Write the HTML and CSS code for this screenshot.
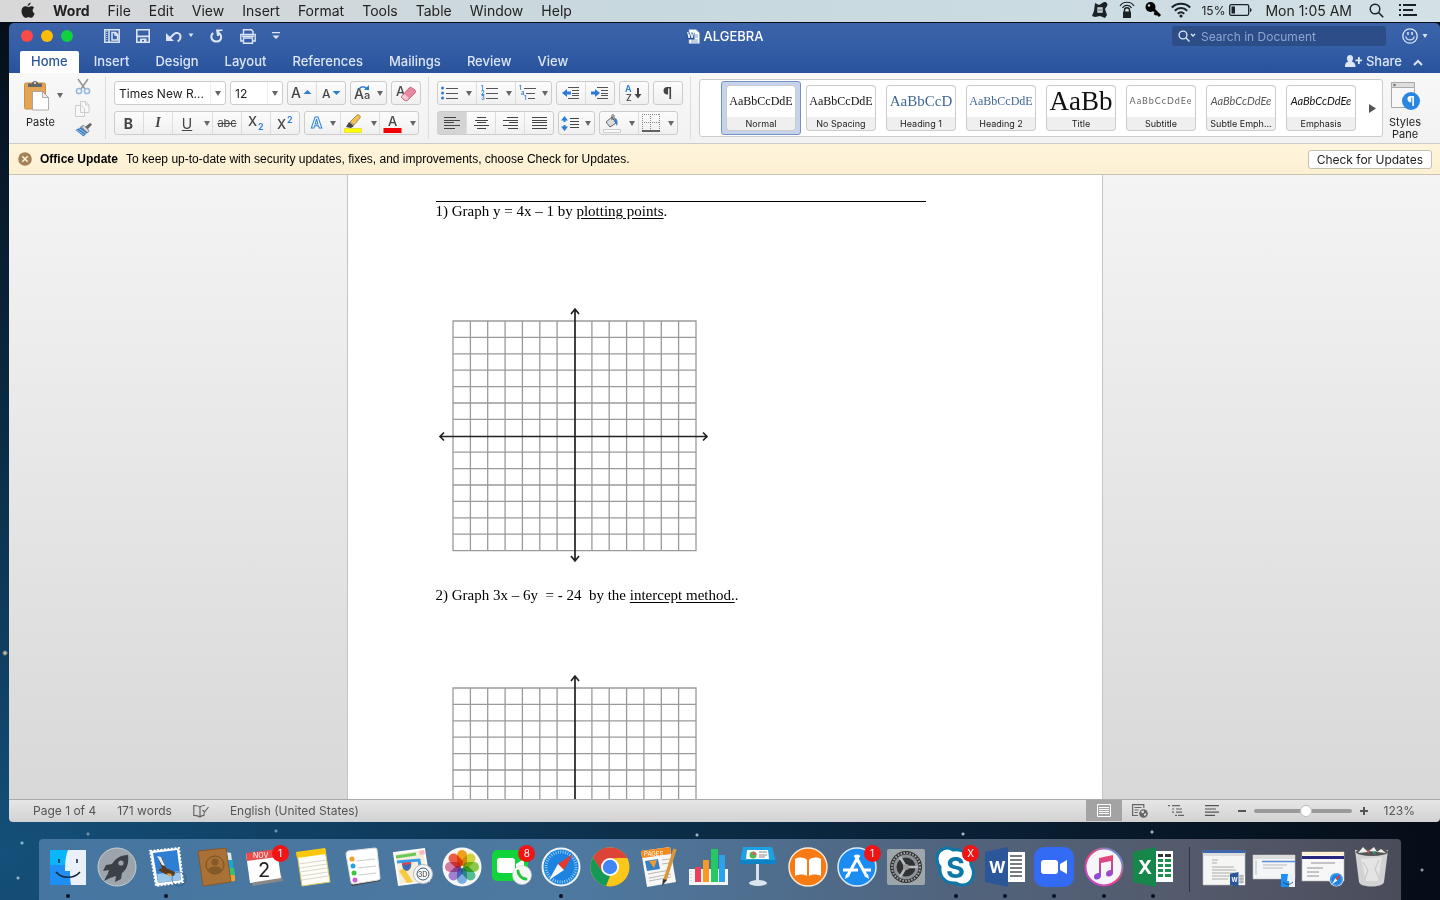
FILE: index.html
```html
<!DOCTYPE html>
<html lang="en">
<head>
<meta charset="UTF-8">
<meta name="viewport" content="width=device-width, initial-scale=1.0">
<title>ALGEBRA</title>
<link rel="stylesheet" href="styles.css">
</head>

<body>
  <header class="menubar">
    <nav class="menus">
      <button class="apple" aria-label="Apple menu"><svg width="14" height="17" viewBox="0 0 14 17"><path fill="#222" d="M9.6 0.5c.1 1.8-1.3 3.4-2.9 3.4C6.500 2.200 8 .7 9.600.5zM13.200 5.800c-2.300 1.400-1.900 4.700.5 5.700-.8 2.200-2 4.300-3.500 4.300-1 0-1.500-.6-2.700-.6s-1.700.6-2.600.6C2.900 15.800.5 12.500.5 9.200c0-3.100 1.900-4.900 3.900-4.900 1.200 0 2 .7 3 .7.900 0 1.800-.8 3.200-.8 1 0 2 .6 2.600 1.600z"/></svg></button>
      <button class="app-name">Word</button>
      <button>File</button>
      <button>Edit</button>
      <button>View</button>
      <button>Insert</button>
      <button>Format</button>
      <button>Tools</button>
      <button>Table</button>
      <button>Window</button>
      <button>Help</button>
    </nav>
    <div class="tray">
      <svg width="18" height="18" viewBox="0 0 18 18"><path fill="#1b2226" d="M4 2l4 2 5-3c3 0 4 2 3 4l-2 3 2 6-2 3-5-2-5 1-3-1 2-5z"/><path fill="none" stroke="#d5e0e4" stroke-width="1.300" d="M7 7h4v4H7zM9 7v4"/></svg>
      <svg width="16" height="18" viewBox="0 0 16 18"><g fill="none" stroke="#1b2226"><path d="M1 5c3-5 11-5 14 0M3.500 7c2-3.500 7-3.500 9 0" stroke-width="1.200"/><path d="M5.500 11V9c0-3 5-3 5 0v2" stroke-width="1.400"/></g><path fill="#1b2226" d="M4 10.500h8v6.500H4z"/></svg>
      <svg width="16" height="18" viewBox="0 0 16 18"><circle cx="5.500" cy="6" r="5" fill="#000"/><circle cx="4" cy="4.500" r="1.200" fill="#d5e0e4"/><path stroke="#000" stroke-width="3" d="M8 8l7 7M11 12l-1 2"/></svg>
      <svg width="20" height="16" viewBox="0 0 20 16"><g fill="none" stroke="#1b2226" stroke-width="2"><path d="M.8 5.500c5-5 13.400-5 18.400 0M3.800 8.700c3.600-3.500 8.800-3.500 12.400 0M6.800 11.800c2-1.900 4.400-1.900 6.400 0"/></g><circle cx="10" cy="14" r="1.600" fill="#1b2226"/></svg>
      <span class="battery">15%
        <svg width="23" height="12" viewBox="0 0 23 12"><rect x=".7" y=".7" width="19" height="10.600" rx="1.500" fill="none" stroke="#1b2226" stroke-width="1.300"/><path fill="#1b2226" d="M2.500 2.500h3.500v7H2.500zM21 4c2 0 2 4 0 4z"/></svg>
      </span>
      <span class="clock">Mon 1:05 AM</span>
      <button aria-label="Spotlight"><svg width="15" height="15" viewBox="0 0 15 15"><circle cx="6" cy="6" r="4.800" fill="none" stroke="#1b2226" stroke-width="1.400"/><path stroke="#1b2226" stroke-width="1.600" d="M9.500 9.500l4.700 4.700"/></svg></button>
      <button aria-label="Notifications"><svg width="18" height="12" viewBox="0 0 18 12"><path stroke="#1b2226" stroke-width="2" d="M0 1h2M4 1h13M0 6h2M4 6h10M0 11h2M4 11h14"/></svg></button>
    </div>
  </header>

  <main class="window">
    <div class="titlebar">
      <div class="quick">
        <button class="light red" aria-label="Close"></button>
        <button class="light yellow" aria-label="Minimize"></button>
        <button class="light green" aria-label="Zoom"></button>
        <div class="quick-tools">
          <button aria-label="Sidebar"><svg width="16" height="14" viewBox="0 0 16 14"><path fill="none" stroke="#dce5f5" stroke-width="1.500" d="M.8.8h14.400v12.400H.8zM5 1v12M8 3.500h3.500l2 2V11H8zM11 3.500V6h2.500"/><path stroke="#dce5f5" stroke-dasharray="1 1" d="M2.800 2v10"/></svg></button>
          <button aria-label="Save"><svg width="14" height="14" viewBox="0 0 14 14"><path fill="none" stroke="#dce5f5" stroke-width="1.600" d="M.8.8h12.400v12.400H.8z"/><path fill="#dce5f5" d="M1 6.500h12v1.800H1zM4 9.500h6.500V13H8v-2H6v2H4z"/></svg></button>
          <button aria-label="Undo"><svg width="28" height="14" viewBox="0 0 28 14"><path fill="none" stroke="#dce5f5" stroke-width="2" d="M3 10l5-5c2.500-2 6-1 6.500 2 .3 2-.8 4-2.800 5.500"/><path fill="#dce5f5" d="M0 4v8h8zM22.500 4.500h5L25 8z"/></svg></button>
          <button aria-label="Repeat"><svg width="14" height="14" viewBox="0 0 14 14"><path fill="none" stroke="#dce5f5" stroke-width="2" d="M3 3.800C-.5 8 2 12.500 6.500 12.500S13 7.500 9 4"/><path fill="#dce5f5" d="M6 .5h6.500v1.500H9.500L9 7H7z"/></svg></button>
          <button aria-label="Print"><svg width="16" height="15" viewBox="0 0 16 15"><path fill="none" stroke="#dce5f5" stroke-width="1.400" d="M3.500 5V.8h8L13 2.500V5M3.500 12H.8V5.500h14.400V12h-2.700M3.500 9h9v5.200h-9z"/><path fill="#dce5f5" d="M2 6.500h12v1.500H2z"/></svg></button>
          <button aria-label="Customize toolbar"><svg width="8" height="8" viewBox="0 0 8 8"><path fill="#dce5f5" d="M0 0h8v1.200H0zM.5 3.500h7L4 7z"/></svg></button>
        </div>
      </div>
      <h1 class="doc-title">
        <svg width="14" height="15" viewBox="0 0 14 15"><path fill="#fff" stroke="#8fa7cf" stroke-width=".6" d="M3 .5h7l3.500 3.500v10.500H3z"/><path stroke="#7f9bd0" d="M9 6h3M9 8h3M5 11h7M5 13h7"/><path fill="#2b579a" d="M.5 3.500h8v7h-8z"/><text x="1" y="9" fill="#fff" font-size="7" font-weight="700">W</text></svg>
        ALGEBRA
      </h1>
      <div class="title-right">
        <label class="search">
          <svg width="18" height="12" viewBox="0 0 18 12"><g fill="none" stroke="#dce5f5" stroke-width="1.400"><circle cx="5" cy="5" r="3.900"/><path d="M8 8l3.500 3.500M13 4l2 2 2-2"/></g></svg>
          <input type="text" placeholder="Search in Document" aria-label="Search in Document">
        </label>
        <button aria-label="Feedback"><svg width="26" height="16" viewBox="0 0 26 16"><g fill="none" stroke="#dce5f5" stroke-width="1.300"><circle cx="8" cy="8" r="7.200"/><path d="M3.800 8.500c.8 4.500 7.600 4.500 8.400 0"/></g><path fill="#dce5f5" d="M5.200 4h1.500v3H5.200zM9.300 4h1.500v3H9.300zM20.500 6h5L23 10z"/></svg></button>
      </div>
    </div>

    <div class="tabs">
      <button class="tab active">Home</button>
      <button class="tab">Insert</button>
      <button class="tab">Design</button>
      <button class="tab">Layout</button>
      <button class="tab">References</button>
      <button class="tab">Mailings</button>
      <button class="tab">Review</button>
      <button class="tab">View</button>
      <button class="share">
        <svg width="17" height="13" viewBox="0 0 17 13"><path fill="#dce5f5" d="M5 0c4 0 3.500 5 1.800 6.500 2 .8 3.700 1.500 3.700 5.500H0c0-4 1.500-4.700 3.300-5.500C1.500 5 1 0 5 0zM13 2h1.800v2.500H17v1.800h-2.200V9H13V6.300h-2.500V4.500H13z"/></svg>
        Share
      </button>
      <button class="collapse" aria-label="Collapse ribbon"><svg width="10" height="7" viewBox="0 0 10 7"><path fill="none" stroke="#dce5f5" stroke-width="2" d="M1 6l4-4 4 4"/></svg></button>
    </div>

    <div class="ribbon">
      <section class="clipboard">
        <button class="paste">
          <span class="paste-icon">
            <svg width="26" height="31" viewBox="0 0 26 31"><rect x=".5" y="3" width="21" height="26" rx="1.500" fill="#e3a556" stroke="#c98f45"/><path fill="#666" d="M4 7V3.500h4C8 0 14 0 14 3.500h4V7z"/><circle cx="11" cy="3" r="1" fill="#eee"/><path fill="#fff" stroke="#999" stroke-width=".8" d="M8.500 11.500h10l6 6V30h-16z"/><path fill="#eee" stroke="#999" stroke-width=".8" d="M18.500 11.500v6h6z"/></svg>
            <i class="caret"></i>
          </span>
          Paste
        </button>
        <div class="clip-tools">
          <button aria-label="Cut"><svg width="16" height="17" viewBox="0 0 16 17"><path stroke="#999" stroke-width="1.600" d="M3 1l7 10M13 1L6 11"/><g fill="none" stroke="#93b8df" stroke-width="1.500"><circle cx="4" cy="13" r="2.600"/><circle cx="12" cy="13" r="2.600"/></g></svg></button>
          <button aria-label="Copy"><svg width="15" height="16" viewBox="0 0 15 16"><path fill="#f8f8f8" stroke="#ccc" d="M.5 4.500h6l3 3v8h-9zM5.500.5h5l3.500 3.500v7.500H5.500zM10.500.5V4H14"/></svg></button>
          <button aria-label="Format painter"><svg width="17" height="14" viewBox="0 0 17 14"><path fill="#666" d="M10 4l5-4 2 1.500L12.500 6.500z"/><path fill="#ddd" stroke="#666" stroke-width=".8" d="M6 3.500l3-1 5 5-1.500 2.500z"/><path fill="#3b7fc4" d="M6 4L.5 7l8 6.500 4-4z"/><path stroke="#f0f0f0" stroke-width=".6" d="M2 7l7 5M4 5.500l7 5"/></svg></button>
        </div>
      </section>

      <section class="tools">
        <div class="row">
          <div class="combo wide"><select aria-label="Font"><option>Times New R...</option></select><i class="caret"></i></div>
          <div class="combo"><select aria-label="Font size"><option>12</option></select><i class="caret"></i></div>
          <div class="group">
            <button aria-label="Grow font"><svg width="21" height="16" viewBox="0 0 21 16"><text x="0" y="13" class="glyph" font-size="14">A</text><path fill="#2b7cd3" d="M12.500 9h8l-4-4z"/></svg></button>
            <button aria-label="Shrink font"><svg width="19" height="16" viewBox="0 0 19 16"><text x="0" y="13" class="glyph" font-size="12">A</text><path fill="#2b7cd3" d="M10.500 6h8l-4 4z"/></svg></button>
          </div>
          <div class="group"><button class="drop" aria-label="Change case"><svg width="18" height="18" viewBox="0 0 18 18"><text x="0" y="15" class="glyph" font-size="14">A</text><text x="10" y="15" class="glyph" font-size="11">a</text><path fill="none" stroke="#2b7cd3" stroke-width="1.600" d="M5 5c2-3 6-3 8 0"/><path fill="#2b7cd3" d="M10 6h5V1z"/></svg><i class="caret"></i></button></div>
          <div class="group"><button aria-label="Clear formatting"><svg width="22" height="20" viewBox="0 0 22 20"><text x="1" y="13" class="glyph" font-size="13">A</text><path fill="#e887a0" stroke="#b75a76" stroke-width=".8" d="M6 14l8-9c1-1 2-1 3 0l3 2c.8 1 .8 2 0 3l-7 7c-1 1-3 1-4 0z"/><path fill="#f8c9d5" d="M6.500 14l3-3 4.500 4-3 2.500z"/></svg></button></div>
        </div>
        <div class="row">
          <div class="group">
            <button class="bold">B</button>
            <button class="italic">I</button>
            <button class="underline">U</button>
            <button class="arrow" aria-label="Underline style"><i class="caret"></i></button>
            <button class="strike">abc</button>
            <button class="script" aria-label="Subscript"><svg width="17" height="18" viewBox="0 0 17 18"><text x="0" y="12" class="glyph" font-size="13">X</text><text x="10" y="16" class="blue" font-size="9">2</text></svg></button>
            <button class="script" aria-label="Superscript"><svg width="17" height="18" viewBox="0 0 17 18"><text x="0" y="15" class="glyph" font-size="13">X</text><text x="10" y="9" class="blue" font-size="9">2</text></svg></button>
          </div>
          <div class="group">
            <button class="drop" aria-label="Text effects"><svg width="16" height="18" viewBox="0 0 16 18"><text x="2" y="14" font-size="15" font-weight="700" fill="#fff" stroke="#2f86d8" stroke-width="1">A</text></svg><i class="caret"></i></button>
            <button class="drop long" aria-label="Highlight"><svg width="19" height="19" viewBox="0 0 19 19"><path fill="#f2c14e" stroke="#6b5b33" stroke-width=".6" d="M6 8l7-7c2-1 4 1 3 3l-6 7z"/><path fill="#444" d="M5 8l5 4-3 2-5-1z"/><path fill="#ff0" stroke="#cccc00" stroke-width=".5" d="M.5 14.500h17v4H.5z"/></svg><i class="caret"></i></button>
            <button class="drop long" aria-label="Font color"><svg width="19" height="19" viewBox="0 0 19 19"><text x="5" y="12" class="glyph" font-size="13">A</text><path fill="#f00000" d="M.5 14h18v5H.5z"/></svg><i class="caret"></i></button>
          </div>
        </div>
      </section>

      <section class="tools">
        <div class="row">
          <div class="group">
            <button class="drop long" aria-label="Bullets"><svg width="17" height="14" viewBox="0 0 17 14"><path stroke="#555" d="M5 2.500h12M5 7.500h12M5 12.500h12"/><g fill="#2b7cd3"><circle cx="1.500" cy="2" r="1.500"/><circle cx="1.500" cy="7" r="1.500"/><circle cx="1.500" cy="12" r="1.500"/></g></svg><i class="caret"></i></button>
            <button class="drop long" aria-label="Numbering"><svg width="17" height="16" viewBox="0 0 17 16"><path stroke="#555" d="M5 3.500h12M5 8.500h12M5 13.500h12"/><g class="blue" font-size="6"><text x="0" y="5">1</text><text x="0" y="10">2</text><text x="0" y="15">3</text></g></svg><i class="caret"></i></button>
            <button class="drop" aria-label="Multilevel list"><svg width="18" height="16" viewBox="0 0 18 16"><path stroke="#555" d="M5 3.500h12M7 8.500h9M9 13.500h7"/><g class="blue" font-size="6"><text x="0" y="5">1</text><text x="2" y="10">a</text><text x="5" y="15">1</text></g></svg><i class="caret"></i></button>
          </div>
          <div class="group">
            <button aria-label="Decrease indent"><svg width="18" height="12" viewBox="0 0 18 12"><path stroke="#555" d="M6 .5h11M10 3.500h7M10 6.500h7M10 8.500h7M6 11.500h11"/><path fill="#2b7cd3" d="M0 6l5-4v2.500h4v3H5V10z"/></svg></button>
            <button aria-label="Increase indent"><svg width="18" height="12" viewBox="0 0 18 12"><path stroke="#555" d="M6 .5h11M10 3.500h7M10 6.500h7M10 8.500h7M6 11.500h11"/><path fill="#2b7cd3" d="M9 6L4 2v2.500H0v3h4V10z"/></svg></button>
          </div>
          <div class="group"><button aria-label="Sort"><svg width="17" height="18" viewBox="0 0 17 18"><text x="0" y="8" class="blue" font-size="9">A</text><text x="1" y="17" class="glyph" font-size="9">Z</text><path fill="#444" d="M12 4h2v6h2.500L13 14.500 9.500 10H12z"/></svg></button></div>
          <div class="group"><button class="pilcrow" aria-label="Show paragraph marks">¶</button></div>
        </div>
        <div class="row">
          <div class="group">
            <button class="pressed" aria-label="Align left"><svg width="16" height="12" viewBox="0 0 16 12"><path stroke="#444" d="M0 .5h12M0 3.500h16M0 5.500h10M0 8.500h16M0 11.500h11"/></svg></button>
            <button aria-label="Center"><svg width="15" height="12" viewBox="0 0 15 12"><path stroke="#444" d="M3 .5h9M1 3.500h13M3 5.500h9M0 8.500h15M3 11.500h9"/></svg></button>
            <button aria-label="Align right"><svg width="15" height="12" viewBox="0 0 15 12"><path stroke="#444" d="M4 .5h11M0 3.500h15M6 5.500h9M0 8.500h15M5 11.500h10"/></svg></button>
            <button aria-label="Justify"><svg width="15" height="12" viewBox="0 0 15 12"><path stroke="#444" d="M0 .5h15M0 3.500h15M0 5.500h15M0 8.500h15M0 11.500h15"/></svg></button>
          </div>
          <div class="group"><button class="drop" aria-label="Line spacing"><svg width="19" height="15" viewBox="0 0 19 15"><path stroke="#444" d="M9 2.500h9M9 5.500h9M9 8.500h9M9 11.500h9"/><path fill="#2b7cd3" d="M3.500 0L7 4.500H4.500V6h-2V4.500H0zM3.500 15L7 10.500H4.500V9h-2v1.500H0z"/></svg><i class="caret"></i></button></div>
          <div class="group">
            <button class="drop long" aria-label="Shading"><svg width="18" height="19" viewBox="0 0 18 19"><path fill="#ddd" stroke="#555" stroke-width=".9" d="M3 8l6-5 4 6-6 4z"/><path fill="none" stroke="#555" d="M9 6V1.500c0-1 2-1 2 0V6"/><path fill="#3b7fc4" d="M12 4c3 1 3 5 2 8-1-1-1-3-3-5z"/><path fill="#fafafa" stroke="#ccc" d="M.5 15.500h17v3H.5z"/></svg><i class="caret"></i></button>
            <button class="drop long" aria-label="Borders"><svg width="18" height="18" viewBox="0 0 18 18"><path fill="none" stroke="#888" stroke-dasharray="1 1" d="M.5 0v17M8.500 0v17M17.500 0v17M0 .5h18M0 8.500h18"/><path stroke="#333" stroke-width="1.500" d="M0 17h18"/></svg><i class="caret"></i></button>
          </div>
        </div>
      </section>

      <section class="styles">
        <div class="gallery">
          <button class="style selected"><span class="sample">AaBbCcDdE</span><span class="name">Normal</span></button>
          <button class="style"><span class="sample">AaBbCcDdE</span><span class="name">No Spacing</span></button>
          <button class="style"><span class="sample heading1">AaBbCcD</span><span class="name">Heading 1</span></button>
          <button class="style"><span class="sample heading2">AaBbCcDdE</span><span class="name">Heading 2</span></button>
          <button class="style"><span class="sample title">AaBb</span><span class="name">Title</span></button>
          <button class="style"><span class="sample subtitle">AaBbCcDdEe</span><span class="name">Subtitle</span></button>
          <button class="style"><span class="sample subtle">AaBbCcDdEe</span><span class="name">Subtle Emph...</span></button>
          <button class="style"><span class="sample emphasis">AaBbCcDdEe</span><span class="name">Emphasis</span></button>
          <button class="more" aria-label="More styles"><svg width="7" height="9" viewBox="0 0 7 9"><path fill="#555" d="M0 0l7 4.500L0 9z"/></svg></button>
        </div>
        <button class="pane">
          <svg width="30" height="30" viewBox="0 0 30 30"><path fill="#f8f8f8" stroke="#aaa" d="M1.500 1.500h23v25h-23z"/><path fill="#ddd" stroke="#aaa" d="M1.500 1.500h23v5h-23z"/><circle cx="4.500" cy="4" r="1.300" fill="#777"/><circle cx="21" cy="20" r="9" fill="#2b86e0"/><text x="17" y="25" fill="#fff" font-size="13" font-weight="700">¶</text></svg>
          Styles<br>Pane
        </button>
      </section>
    </div>

    <div class="update">
      <button class="dismiss" aria-label="Dismiss"><svg width="14" height="14" viewBox="0 0 14 14"><circle cx="7" cy="7" r="6.800" fill="#a5815a"/><path stroke="#fff3da" stroke-width="1.600" d="M4.300 4.300l5.400 5.400M9.700 4.300L4.300 9.700"/></svg></button>
      <strong>Office Update</strong>
      <span>To keep up-to-date with security updates, fixes, and improvements, choose Check for Updates.</span>
      <button class="check">Check for Updates</button>
    </div>

    <div class="canvas">
      <article class="page">
        <hr>
        <p>1) Graph y = 4x – 1 by <u>plotting points</u>.</p>
        <svg class="graph first" width="271" height="256" viewBox="0 0 271 256">
          <g id="axes">
            <path fill="none" stroke="#9a9a9a" stroke-width="1.300" d="M15 14h243v229.600H15zM32.400 14v229.600M49.700 14v229.600M67.100 14v229.600M84.400 14v229.600M101.800 14v229.600M119.100 14v229.600M153.900 14v229.600M171.200 14v229.600M188.600 14v229.600M205.900 14v229.600M223.300 14v229.600M240.600 14v229.600M15 30.400h243M15 46.800h243M15 63.200h243M15 79.600h243M15 96h243M15 112.400h243M15 145.200h243M15 161.600h243M15 178h243M15 194.400h243M15 210.800h243M15 227.200h243"/>
            <path fill="none" stroke="#222" stroke-width="1.700" d="M137 2v252M2 129.500h267M133 7l4-5 4 5M133 249l4 5 4-5M6 125.500l-4 4 4 4M265 125.500l4 4-4 4"/>
          </g>
        </svg>
        <p class="second">2) Graph 3x – 6y &nbsp;= - 24 &nbsp;by the <u>intercept method.</u>.</p>
        <svg class="graph" width="271" height="256" viewBox="0 0 271 256"><use href="#axes"/></svg>
      </article>
    </div>

    <footer class="status">
      <span>Page 1 of 4</span>
      <span>171 words</span>
      <button aria-label="Proofing"><svg width="16" height="14" viewBox="0 0 16 14"><path fill="none" stroke="#666" stroke-width="1.200" d="M7 3v10M7 3C5 1.500 3 1.500.8 1.500v9.800c2.200 0 4.200 0 6.200 1.700 1-1 2-1.500 4-1.700V9M7 3c1-1 2-1.500 5-1.500M9.500 6l2 2L15.500 3"/></svg></button>
      <button>English (United States)</button>
      <div class="view-tools">
        <div class="views">
          <button class="view current" aria-label="Print layout"><svg width="14" height="13" viewBox="0 0 14 13"><path fill="none" stroke="#fff" d="M.5.5h13v12H.5zM2 3.500h10M2 5.500h10M2 7.500h10M2 9.500h10"/></svg></button>
          <button class="view" aria-label="Web layout"><svg width="16" height="14" viewBox="0 0 16 14"><path fill="none" stroke="#666" stroke-width="1.200" d="M6 11.500H.6V.6h11.200V4M2.500 3.500h7M2.500 6h4M2.500 8.500h3"/><circle cx="11.500" cy="9.500" r="4.300" fill="#666"/><path fill="#ddd" d="M9 7l3-.5v2l-2 1zM12 10l2-1v2l-2 1z"/></svg></button>
          <button class="view" aria-label="Outline"><svg width="16" height="11" viewBox="0 0 16 11"><path stroke="#666" stroke-width="1.200" d="M0 .6h2M4 .6h8M4 4h2M8 4h6M4 7.200h2M8 7.200h6M7 10.400h2M10 10.400h6"/></svg></button>
          <button class="view" aria-label="Draft"><svg width="14" height="11" viewBox="0 0 14 11"><path stroke="#555" stroke-width="1.200" d="M0 .6h14M0 4h11M0 7.200h14M0 10.400h10"/></svg></button>
        </div>
        <button aria-label="Zoom out"><svg width="8" height="8" viewBox="0 0 8 8"><path stroke="#555" stroke-width="2" d="M0 4h8"/></svg></button>
        <input class="zoom" type="range" min="0" max="100" value="54" aria-label="Zoom">
        <button aria-label="Zoom in"><svg width="8" height="8" viewBox="0 0 8 8"><path stroke="#555" stroke-width="2" d="M0 4h8M4 0v8"/></svg></button>
        <span class="percent">123%</span>
      </div>
    </footer>
  </main>

  <nav class="dock">
    <button class="app running" aria-label="Finder"><svg viewBox="0 0 40 40"><path fill="#1d8ff5" d="M2 3h36v35H2z"/><path fill="#0bb5fb" d="M2 3h19l-3 15H2z"/><path fill="#eaf1fa" d="M20 3h18v35H23c-1-5-1-10-1-14h-5C17 14 18 8 20 3z"/><path fill="none" stroke="#10243c" stroke-width="1.500" d="M11 12v4M29 12v4M8 25c6 7 18 7 24 0"/></svg></button>
    <button class="app" aria-label="Launchpad"><svg viewBox="0 0 40 40"><circle cx="20" cy="20" r="19" fill="#9ba5ab" stroke="#c8ced1"/><path fill="#3b4146" d="M31 8c-8 0-13 4-16 9l-6 1-3 6 6-1-2 6 3 2 6-2-1 6 6-3 1-6c5-4 7-10 6-18zM10 28l-3 6 6-3z"/><circle cx="24" cy="16" r="2.600" fill="#9ba5ab"/></svg></button>
    <button class="app running" aria-label="Mail"><svg viewBox="0 0 40 40"><path fill="#fff" stroke="#fff" stroke-width="2" stroke-dasharray="2 1.500" d="M4 4l29-3 4 34-27 4z"/><path fill="#2e7fd4" d="M7 6l24-3 4 30-23 3z"/><path fill="#9bc6ea" d="M11 27l23-3 1 9-23 3z"/><path fill="#5b3b1f" d="M12 10l4 1 4 10 9 4-1 4-9-2-7-4 4-2z"/><path fill="#eee" d="M11 9l4 1 4 9-3-1z"/><path fill="#e0a030" d="M21 26l5 1-3 3z"/><circle cx="33" cy="32" r="7" fill="none" stroke="#25517c" opacity=".6"/></svg></button>
    <button class="app" aria-label="Contacts"><svg viewBox="0 0 40 40"><path fill="#dce8ee" d="M30 5l5 1 1 8-4 1z"/><path fill="#19a5d8" d="M31 13h6v9h-5z"/><path fill="#38c172" d="M32 21h6l1 7h-6z"/><path fill="#f0a030" d="M33 28h6v6l-6 1z"/><path fill="#a97135" stroke="#85592a" d="M2 4l28-3 5 34-28 4z"/><circle cx="19" cy="18" r="9" fill="none" stroke="#76501f"/><circle cx="19" cy="15" r="3.500" fill="#85592a"/><path fill="#85592a" d="M12 23c2-5 12-5 14 0-4 5-10 5-14 0z"/></svg></button>
    <button class="app" aria-label="Calendar"><svg viewBox="0 0 40 40"><path fill="#888" d="M4 31l32-4 2 7-30 5z"/><path fill="#fff" d="M1 7l31-4 4 28-31 5z"/><path fill="#ea4b4b" d="M1 6l31-4 1 8-31 4z"/><text x="8" y="11" fill="#fff" font-size="7">NOV</text><text x="13" y="30" fill="#222" font-size="20">2</text></svg><span class="badge">1</span></button>
    <button class="app" aria-label="Notes"><svg viewBox="0 0 40 40"><path fill="#fdfdf5" stroke="#d9c76a" d="M3 6l28-4 5 33-28 4z"/><path fill="#fbc80c" d="M2 5l29-4 1 6L3 11z"/><path stroke="#d8d8d0" d="M5 17l27-4M6 21l27-4M6 25l27-4M7 29l27-4M8 33l26-4"/></svg></button>
    <button class="app" aria-label="Reminders"><svg viewBox="0 0 40 40"><path fill="#444" d="M6 34l30-4v4L8 39z"/><path fill="#fff" stroke="#ddd" d="M4 4l27-3q2 0 2 2l3 28q0 2-2 2L9 37q-2 0-2-2L2 7q0-2 2-3z"/><circle cx="8" cy="12" r="2.500" fill="#fa9a1f"/><circle cx="9" cy="19" r="2.500" fill="#2ba3e0"/><circle cx="10" cy="26" r="2.500" fill="#38c73a"/><circle cx="11" cy="33" r="2.500" fill="#cf58dc"/><path stroke="#ccc" d="M13 14l18-2M14 21l18-2M15 28l17-2"/></svg></button>
    <button class="app" aria-label="Maps"><svg viewBox="0 0 40 40"><path fill="#f4eeda" stroke="#fff" stroke-width="2" d="M1 6l30-4 5 32-30 4z"/><path stroke="#6bc759" stroke-width="3" d="M3 10l20-3"/><path fill="none" stroke="#3a9dea" stroke-width="3" d="M4 15l22-2 2 12"/><path fill="#f6ca45" d="M6 24l5-3 9 14-6 1z"/><path fill="#f7b7c2" d="M26 4l5-1 1 4-5 1z"/><path fill="#4669ad" d="M9 16l9-1c1 5-1 8-4 9-4-1-5-4-5-8z"/><path fill="#e0444c" d="M9 16l9-1v2l-9 1z"/><circle cx="30" cy="27" r="9.500" fill="#f8f8f8" stroke="#bbb"/><circle cx="30" cy="27" r="6" fill="none" stroke="#3d5b78"/><text x="25" y="30" fill="#333" font-size="7">3D</text></svg></button>
    <button class="app" aria-label="Photos"><svg viewBox="0 0 40 40"><circle cx="20" cy="20" r="19.500" fill="#f7f7f5"/><g class="petals"><rect x="15" y="3" width="10" height="16" rx="5" fill="#fba51f"/><rect x="15" y="3" width="10" height="16" rx="5" fill="#d8da3c" transform="rotate(45 20 20)"/><rect x="15" y="3" width="10" height="16" rx="5" fill="#8fd04a" transform="rotate(90 20 20)"/><rect x="15" y="3" width="10" height="16" rx="5" fill="#58c39b" transform="rotate(135 20 20)"/><rect x="15" y="3" width="10" height="16" rx="5" fill="#7cb4ec" transform="rotate(180 20 20)"/><rect x="15" y="3" width="10" height="16" rx="5" fill="#a684d6" transform="rotate(225 20 20)"/><rect x="15" y="3" width="10" height="16" rx="5" fill="#dc7fb0" transform="rotate(270 20 20)"/><rect x="15" y="3" width="10" height="16" rx="5" fill="#f0604c" transform="rotate(315 20 20)"/></g></svg></button>
    <button class="app" aria-label="FaceTime"><svg viewBox="0 0 40 40"><rect x="0" y="3" width="36" height="31" rx="5" fill="#12d33c"/><rect x="5" y="11" width="18" height="15" rx="3" fill="#fff"/><path fill="#fff" d="M24 17l8-5v13l-8-5z"/><circle cx="30" cy="28" r="9.500" fill="#f5f5f5" stroke="#ccc" stroke-width=".6"/><path fill="none" stroke="#27c33f" stroke-width="3" stroke-linecap="round" d="M26 24c0 4 4 8 8 8"/></svg><span class="badge">8</span></button>
    <button class="app running" aria-label="Safari"><svg viewBox="0 0 40 40"><g id="compass"><circle cx="20" cy="20" r="19.500" fill="#f2f4f6"/><circle cx="20" cy="20" r="17.500" fill="#1c84e0"/><circle cx="20" cy="20" r="15" fill="none" stroke="#a9d8f7" stroke-width="3" stroke-dasharray=".8 1.600"/><path fill="#e8382e" d="M32 7L17 17l6 6z"/><path fill="#f5f5f5" d="M8 33l9-16 6 6z"/></g></svg></button>
    <button class="app" aria-label="Chrome"><svg viewBox="0 0 40 40"><circle cx="20" cy="20" r="19.500" fill="#fbc719"/><path fill="#db4437" d="M3 10.500a19.500 19.500 0 0 1 34 0L20 11.500 11.500 24z"/><path fill="#159957" d="M3 10.500l9 14 8 4.500-4 10A19.500 19.500 0 0 1 3 10.500z"/><path fill="#db4437" d="M20 11h17.300L36 8.500 20 6z"/><circle cx="20" cy="20" r="9" fill="#fff"/><circle cx="20" cy="20" r="7.200" fill="#4285f4"/></svg></button>
    <button class="app" aria-label="Pages"><svg viewBox="0 0 40 40"><path fill="#f7f7f5" d="M1 4l29-4 6 35-29 5z"/><path fill="#f58a1f" d="M1 4l29-4 1 7L2 11z"/><text x="4" y="9" fill="#fff" font-size="6">PAGES</text><path fill="#397fc4" d="M5 14l13-2 2 10-13 2z"/><path fill="#f39b35" d="M9 14l8-1-3 8z"/><path stroke="#b8b8b8" d="M22 13l8-1M22 17l8-1M8 27l22-4M9 31l22-4M9 34l22-4"/><path stroke="#d9963a" stroke-width="3.500" d="M35 2L25 33"/><path fill="#333" d="M23 32l4 1-5 6z"/></svg></button>
    <button class="app" aria-label="Numbers"><svg viewBox="0 0 40 40"><path fill="#f5f5f5" d="M0 22h39v16H0z"/><path fill="#ec3f5c" d="M6 20h6v15H6z"/><path fill="#f79a25" d="M14 13h6v22h-6z"/><path fill="#27c765" d="M22 2h7v33h-7z"/><path fill="#2aa2ec" d="M30 8h6v27h-6z"/><path stroke="#bbb" stroke-dasharray="1 2" d="M2 24v12"/></svg></button>
    <button class="app" aria-label="Keynote"><svg viewBox="0 0 40 40"><path fill="#d5e0e8" d="M18 16h3v20h-3z"/><ellipse cx="20" cy="36" rx="9" ry="3" fill="#d9e6ee"/><path fill="#1ba1e4" d="M5 0h29l4 15H2z"/><path fill="#0e83c6" d="M2 13h36v4H2z"/><path fill="#fff" d="M9 3h21l1 9H8z"/><circle cx="15" cy="8" r="3.500" fill="#51b94b"/><path fill="#e75177" d="M15 8V4.500a3.500 3.500 0 0 1 3.500 3.500z"/><path stroke="#888" d="M21 5h8M21 8h8M21 10h6"/></svg></button>
    <button class="app" aria-label="iBooks"><svg viewBox="0 0 40 40"><circle cx="20" cy="20" r="19" fill="#f77a13" stroke="#fbe9d6" stroke-width="1.500"/><path fill="#fff" d="M19 13c-3-3-8-3-12-1v17c4-2 9-2 12 0zM21 13c3-3 8-3 12-1v17c-4-2-9-2-12 0z"/></svg></button>
    <button class="app" aria-label="App Store"><svg viewBox="0 0 40 40"><circle cx="20" cy="20" r="19" fill="#1b8df2" stroke="#dcecfa" stroke-width="1.500"/><path fill="none" stroke="#fff" stroke-width="3" d="M18 8l11 20M22 8L11 28M6 23h15M27 23h7"/><path fill="#fff" d="M9 27l4 2-5 3zM31 27l-4 2 5 3z"/></svg><span class="badge">1</span></button>
    <button class="app" aria-label="System Preferences"><svg viewBox="0 0 40 40"><rect x="1" y="2" width="38" height="36" rx="2" fill="#9ca6ab"/><circle cx="20" cy="20" r="16" fill="#303336"/><circle cx="20" cy="20" r="14" fill="none" stroke="#aaa" stroke-width="2" stroke-dasharray="1.500 1.500"/><circle cx="20" cy="20" r="11" fill="none" stroke="#8d9296" stroke-width="3"/><path stroke="#b6babc" stroke-width="2.500" d="M20 20h12M20 20l-6-10M20 20l-6 10"/><circle cx="20" cy="20" r="3" fill="#999"/></svg></button>
    <button class="app running" aria-label="Skype"><svg viewBox="0 0 40 40"><path fill="#fff" stroke="#0d77a8" stroke-width="3" d="M4 4c5-4 10-3 13-1 10-2 18 6 18 15 5 8 2 20-9 20-3 0-4-1-6-2C9 37 3 29 4 20 0 15 0 8 4 4z"/><text x="10" y="31" fill="#0d77a8" font-size="29" font-weight="700">S</text></svg><span class="badge">X</span></button>
    <button class="app running" aria-label="Word"><svg viewBox="0 0 40 40"><g id="word"><path fill="#fff" d="M22 5h18v30H22z"/><path stroke="#4b5058" stroke-width="1.500" d="M25 9h12M25 13h12M25 17h12M25 21h12M25 25h12M25 29h12"/><path fill="#2b579a" d="M0 5l23-5v40L0 35z"/><text x="4" y="26" fill="#fff" font-size="16" font-weight="700">W</text></g></svg></button>
    <button class="app running" aria-label="Zoom"><svg viewBox="0 0 40 40"><rect x="0" y="0" width="40" height="40" rx="10" fill="#346bf5"/><rect x="7" y="13" width="17" height="14" rx="3" fill="#fff"/><path fill="#fff" d="M26 17l7-4v14l-7-4z"/></svg></button>
    <button class="app running" aria-label="iTunes"><svg viewBox="0 0 40 40"><defs><linearGradient id="ring" x1="0" y1="1" x2="1" y2="0"><stop offset="0" stop-color="#b04be8"/><stop offset=".5" stop-color="#f2427a"/><stop offset="1" stop-color="#38a9ef"/></linearGradient><linearGradient id="note" x1="0" y1="0" x2="0" y2="1"><stop offset="0" stop-color="#f4466b"/><stop offset="1" stop-color="#8249e8"/></linearGradient></defs><circle cx="20" cy="20" r="18.500" fill="#f6f5f8" stroke="url(#ring)" stroke-width="2"/><path fill="url(#note)" d="M15 11l14-3v18c0 4-7 5-7 1 0-3 3-4 5-4v-9l-10 2v13c0 4-7 5-7 1 0-3 3-4 5-4z"/></svg></button>
    <button class="app running" aria-label="Excel"><svg viewBox="0 0 40 40"><path fill="#fff" d="M22 4h18v31H22z"/><path fill="#1e8f50" d="M25 12h5v3h-5zM32 12h6v3h-6zM25 17h5v3h-5zM32 17h6v3h-6zM25 22h5v3h-5zM32 22h6v3h-6zM25 27h5v3h-5zM32 27h6v3h-6z"/><path fill="#333" d="M25 7h5v3h-5zM32 7h6v3h-6z"/><path fill="#17864a" d="M0 5l23-5v40L0 35z"/><text x="5" y="27" fill="#fff" font-size="19" font-weight="700">X</text></svg></button>
    <span class="divider"></span>
    <button class="app" aria-label="Word document"><svg viewBox="0 0 44 40"><path fill="#f5f5f3" stroke="#bbb" stroke-width=".6" d="M1 4h42v34H1z"/><path fill="#3d66ab" d="M1 3h42v3H1z"/><path fill="#ddd" d="M1 6h42v3H1z"/><path stroke="#999" stroke-width=".8" d="M10 13h6M10 16h5M10 20h22M10 23h24M10 26h22M10 29h18M10 32h16"/><use href="#word" transform="translate(28 25) scale(.37)"/></svg></button>
    <button class="app" aria-label="Finder window"><svg viewBox="0 0 44 40"><path fill="#f4f5f7" stroke="#bbb" stroke-width=".6" d="M1 8h42v24H1z"/><path fill="#ddd" d="M1 8h42v4H1z"/><path stroke="#5b8dd8" stroke-width="1.500" d="M10 14.500h33"/><path stroke="#aaa" stroke-width=".8" d="M4 13v15M11 18h24M11 21h20"/><path fill="#1d8ff5" d="M29 27h14v13H29z"/><path fill="#eaf1fa" d="M36 27h7v13h-6v-6h-2z"/><path fill="none" stroke="#10243c" stroke-width=".7" d="M31 35c3 3 7 3 10 0"/></svg></button>
    <button class="app" aria-label="Safari window"><svg viewBox="0 0 44 40"><path fill="#f7f7f8" stroke="#bbb" stroke-width=".6" d="M1 5h42v29H1z"/><path fill="#fff0d0" d="M1 5h42v3H1z"/><path fill="#27277f" d="M1 9h42v3H1z"/><path stroke="#777" stroke-width=".8" d="M10 16h24M6 21h16M6 25h12M6 29h12"/><use href="#compass" transform="translate(28 25) scale(.37)"/></svg></button>
    <button class="app" aria-label="Trash"><svg viewBox="0 0 40 40"><path fill="#d2d2d2" d="M3 3h33l-4 32c-1 6-24 6-25 0z"/><path fill="#e4e4e4" d="M9 12l5 22h12l4-24z"/><ellipse cx="20" cy="5" rx="16" ry="4" fill="#555"/><path fill="#eee" d="M6 6l5-6 5 5zM17 4l5-4 3 5zM25 5l4-3 5 4z"/><path fill="#ce5656" d="M15 3l3 1-2 3z"/><path fill="#3d8b7a" d="M20 5l4-1-1 4z"/><path fill="none" stroke="#c4c4c4" d="M11 15l5 8-3 9M27 13l-4 9 4 9"/></svg></button>
  </nav>
</body>
</html>
```
FILE: styles.css
```css
* {
  box-sizing: border-box;
  margin: 0;
  padding: 0;
}

body {
  height: 100vh;
  display: flex;
  flex-direction: column;
  overflow: hidden;
  font-family: Inter, Roboto, sans-serif;
  font-size: 12px;
  color: #222;
  background:
    radial-gradient(circle at 5px 653px, #c7b79b 0 1px, transparent 3px),
    radial-gradient(circle at 88px 834px, #6f91ab 0 1px, transparent 2px),
    radial-gradient(circle at 276px 831px, #6f91ab 0 1px, transparent 2px),
    radial-gradient(circle at 697px 835px, #a4b3c2 0 1px, transparent 2px),
    radial-gradient(circle at 963px 834px, #a4b3c2 0 1px, transparent 2px),
    radial-gradient(circle at 1152px 832px, #a4b3c2 0 1px, transparent 2px),
    radial-gradient(circle at 1422px 870px, #8795a8 0 1px, transparent 2px),
    radial-gradient(circle at 22px 843px, #8fb4cc 0 1px, transparent 2px),
    radial-gradient(circle at 18px 878px, #8fb4cc 0 1px, transparent 2px),
    radial-gradient(ellipse at 0 95%, #14507a, #0b2b45 35%, transparent 70%),
    #060d18;
}

button {
  border: none;
  background: none;
  font: inherit;
  color: inherit;
}

svg {
  display: block;
  flex: none;
  overflow: visible;
}

/* menu bar */
.menubar {
  height: 22px;
  flex: none;
  display: flex;
  align-items: center;
  justify-content: space-between;
  padding: 0 23px 2px 21px;
  font-size: 14px;
  background: linear-gradient(90deg, #d9d8d9, #c7d8df 45%, #cbdbe2 70%, #d3e1e6);
}

.menus, .tray {
  display: flex;
  align-items: center;
}

.menus {
  gap: 18px;
}

.app-name {
  font-weight: 700;
}

.tray {
  gap: 10px;
}

.battery {
  display: flex;
  align-items: center;
  gap: 4px;
  font-size: 12px;
}

.clock {
  margin: 0 7px 0 3px;
}

.tray button + button {
  margin-left: 5px;
}

/* word window */
.window {
  flex: 1;
  min-height: 0;
  margin: 1px 0 0 9px;
  display: flex;
  flex-direction: column;
  border-radius: 5px 5px 4px 4px;
  overflow: hidden;
}

.titlebar {
  height: 27px;
  flex: none;
  display: grid;
  grid-template-columns: 1fr auto 1fr;
  align-items: center;
  padding: 0 12px 1px;
  background: linear-gradient(#3b63a9, #335da5);
}

.quick, .quick-tools {
  display: flex;
  align-items: center;
}

.quick {
  gap: 8px;
}

.quick-tools {
  gap: 16px;
  margin-left: 23px;
}

.light {
  width: 12px;
  height: 12px;
  border-radius: 50%;
}

.red { background: #fc4a48; }
.yellow { background: #fdbc09; }
.green { background: #10cf40; }

.doc-title {
  display: flex;
  align-items: center;
  gap: 4px;
  font-size: 13px;
  font-weight: 500;
  color: #fff;
}

.title-right {
  display: flex;
  justify-content: flex-end;
  align-items: center;
  gap: 16px;
}

.search {
  width: 214px;
  height: 20px;
  display: flex;
  align-items: center;
  gap: 5px;
  padding-left: 6px;
  border-radius: 3px;
  background: #2c4d88;
}

.search input {
  min-width: 0;
  flex: 1;
  border: none;
  outline: none;
  background: none;
  font: inherit;
  color: #fff;
}

.search input::placeholder {
  color: #8ea5cf;
}

.tabs {
  height: 23px;
  flex: none;
  display: flex;
  align-items: stretch;
  padding: 1px 17px 0 11px;
  gap: 4px;
  color: #dce5f5;
  font-size: 13px;
  font-weight: 500;
  background: linear-gradient(#335da5, #28529b);
}

.tab, .share {
  padding: 0 11px 2px;
}

.tab.active {
  color: #2b579a;
  background: #fff;
  border-radius: 2px 2px 0 0;
}

.share {
  margin-left: auto;
  padding-right: 7px;
  display: flex;
  align-items: center;
  gap: 4px;
}

/* ribbon */
.ribbon {
  height: 71px;
  flex: none;
  display: flex;
  padding: 4px 0;
  border-bottom: 1px solid #ccc;
  background: linear-gradient(#f8f8f8, #f2f2f2);
}

.clipboard {
  width: 97px;
  display: flex;
  align-items: flex-start;
  padding: 1px 0 0 15px;
  border-right: 1px solid #ddd;
}

.paste {
  display: flex;
  flex-direction: column;
  align-items: flex-start;
  gap: 4px;
  padding-top: 2px;
  font-size: 11px;
  text-indent: 2px;
}

.paste-icon {
  display: flex;
  align-items: center;
  gap: 7px;
}

.clip-tools {
  display: flex;
  flex-direction: column;
  gap: 6px;
  margin-left: 12px;
}

.caret {
  flex: none;
  width: 0;
  border: 3px solid transparent;
  border-top: 5px solid #666;
  border-bottom: none;
}

.tools {
  display: flex;
  flex-direction: column;
  gap: 6px;
  padding: 4px 7px 0 8px;
  border-right: 1px solid #ddd;
}

.row {
  display: flex;
  gap: 4px;
}

.combo, .group {
  display: flex;
  align-items: center;
  height: 24px;
  border: 1px solid #ccc;
  border-radius: 3px;
}

.combo {
  width: 53px;
  padding-right: 4px;
  background: #fff;
}

.combo.wide {
  width: 112px;
}

.combo select {
  flex: 1;
  min-width: 0;
  height: 22px;
  margin-right: 4px;
  padding-left: 4px;
  appearance: none;
  border: none;
  border-right: 1px solid #eee;
  background: none;
  font: inherit;
  color: #222;
}

.group {
  background: linear-gradient(#fcfcfc, #f0f0f0);
}

.group button {
  width: 29px;
  height: 22px;
  display: flex;
  align-items: center;
  justify-content: center;
  font-size: 14px;
  color: #444;
}

.group button:first-child {
  margin-left: -1px;
}

.group button + button {
  border-left: 1px solid #ddd;
}

.group .drop {
  width: 36px;
  gap: 5px;
}

.group .long {
  width: 39px;
  gap: 8px;
}

.group .pressed {
  background: #d4d4d4;
}

.group .bold {
  font-weight: 700;
}

.group .italic {
  font-family: "Liberation Serif", serif;
  font-style: italic;
  font-weight: 700;
}

.group .underline {
  text-decoration: underline;
}

.group button.arrow {
  width: 11px;
  border-left: none;
}

.group .strike {
  font-size: 11px;
  text-decoration: line-through;
}

.group .pilcrow {
  font-size: 16px;
  font-weight: 500;
}

.glyph {
  fill: #444;
  font-weight: 500;
}

.blue {
  fill: #2b7cd3;
  font-weight: 600;
}

/* style gallery */
.styles {
  flex: 1;
  min-width: 0;
  display: flex;
  align-items: flex-start;
  padding: 2px 19px 0 8px;
}

.gallery {
  flex: 1;
  min-width: 0;
  height: 58px;
  display: flex;
  align-items: center;
  padding-left: 21px;
  border: 1px solid #ccc;
  border-radius: 3px;
  background: #fff;
  overflow: hidden;
}

.style {
  flex: none;
  width: 80px;
  height: 54px;
  padding: 3px 4px;
  display: flex;
  flex-direction: column;
  border: 1px solid transparent;
  border-radius: 3px;
}

.style.selected {
  border-color: #7392c4;
  background: #c5d4ec;
}

.sample, .name {
  width: 100%;
  border: 1px solid #ccc;
}

.sample {
  height: 32px;
  line-height: 30px;
  border-bottom: none;
  border-radius: 4px 4px 0 0;
  white-space: nowrap;
  background: #fff;
  font-family: "Liberation Serif", serif;
  font-size: 12px;
  color: #111;
}

.name {
  height: 14px;
  line-height: 13px;
  border-top: none;
  border-radius: 0 0 4px 4px;
  background: #efefef;
  font-size: 9px;
  color: #222;
}

.heading1 {
  font-size: 15px;
  color: #3f6797;
}

.heading2 {
  font-size: 12px;
  color: #3f6797;
}

.title {
  font-size: 27px;
}

.subtitle, .subtle, .emphasis {
  font-family: Lato, sans-serif;
  font-size: 11px;
}

.subtitle {
  font-size: 9px;
  letter-spacing: 1px;
  color: #666;
}

.subtle {
  font-style: italic;
  color: #555;
}

.emphasis {
  font-style: italic;
}

.more {
  margin-left: auto;
  padding: 0 6px;
}

.pane {
  display: flex;
  flex-direction: column;
  align-items: center;
  margin-left: 6px;
  font-size: 11px;
  line-height: 12px;
}

.pane svg {
  margin: 2px 0 5px;
}

/* update bar */
.update {
  height: 31px;
  flex: none;
  display: flex;
  align-items: center;
  gap: 8px;
  padding: 0 8px 0 9px;
  border-bottom: 1px solid #c9c3b4;
  background: linear-gradient(#fff5dc, #fcf0d2);
  font-family: "Liberation Sans", Arial, sans-serif;
  color: #000;
}

.check {
  height: 19px;
  margin-left: auto;
  padding: 0 8px;
  border: 1px solid #c5c0b5;
  border-radius: 3px;
  background: #fff;
  font-family: Inter, Roboto, sans-serif;
  color: #222;
}

/* document */
.canvas {
  flex: 1;
  min-height: 0;
  overflow: hidden;
  background: linear-gradient(#f4f4f4, #d8d8d8);
}

.page {
  width: 756px;
  min-height: 100%;
  margin: 0 auto;
  padding: 26px 88px 0;
  border: 1px solid #c4c4c4;
  border-width: 0 1px;
  background: #fff;
  font-family: "Liberation Serif", "Times New Roman", serif;
  font-size: 15px;
  line-height: 18px;
  color: #000;
}

.page hr {
  width: 490px;
  border: none;
  border-top: 1px solid #000;
}

.page u {
  text-underline-offset: 2px;
}

.second {
  margin-top: 23px;
}

.graph {
  margin: 70px 0 0 2px;
}

.graph.first {
  margin-top: 87px;
}

/* status bar */
.status {
  height: 23px;
  flex: none;
  display: flex;
  align-items: center;
  padding: 0 25px 1px 24px;
  gap: 21px;
  border-top: 1px solid #aaa;
  background: linear-gradient(#e6e6e6, #d2d2d2);
  color: #555;
}

.view-tools {
  display: flex;
  align-items: center;
  align-self: stretch;
  gap: 8px;
  margin-left: auto;
}

.views {
  display: flex;
  align-self: stretch;
}

.view {
  width: 36px;
  display: flex;
  align-items: center;
  justify-content: center;
}

.view.current {
  background: #a3a3a3;
}

.zoom {
  width: 98px;
  height: 12px;
  appearance: none;
  background: none;
}

.zoom::-webkit-slider-runnable-track {
  height: 4px;
  border-radius: 2px;
  background: #9a9a9a;
}

.zoom::-webkit-slider-thumb {
  appearance: none;
  width: 12px;
  height: 12px;
  margin-top: -4px;
  border: 1px solid #bbb;
  border-radius: 50%;
  background: #fff;
}

.percent {
  margin-left: 8px;
}

/* dock */
.dock {
  height: 61px;
  flex: none;
  display: flex;
  margin: 17px 39px 0;
  padding: 0 4px;
  border-radius: 4px 4px 0 0;
  background: linear-gradient(90deg, #4576a1, #4e789f 40%, #50657f 65%, #545a6b 85%, #4a4c5a);
}

.app {
  flex: 1;
  min-width: 0;
  display: flex;
  flex-direction: column;
  align-items: center;
  padding-top: 8px;
  position: relative;
}

.app svg {
  width: auto;
  height: 40px;
}

.petals rect {
  mix-blend-mode: multiply;
}

.running::after {
  content: "";
  width: 4px;
  height: 4px;
  margin-top: 7px;
  border-radius: 50%;
  background: #0a0f22;
}

.badge {
  position: absolute;
  top: 6px;
  right: 1px;
  width: 17px;
  height: 17px;
  line-height: 17px;
  border-radius: 50%;
  background: #f01414;
  color: #fff;
  font-size: 10px;
}

.divider {
  width: 1px;
  margin: 8px 10px 8px 11px;
  background: #30333f;
}
```
